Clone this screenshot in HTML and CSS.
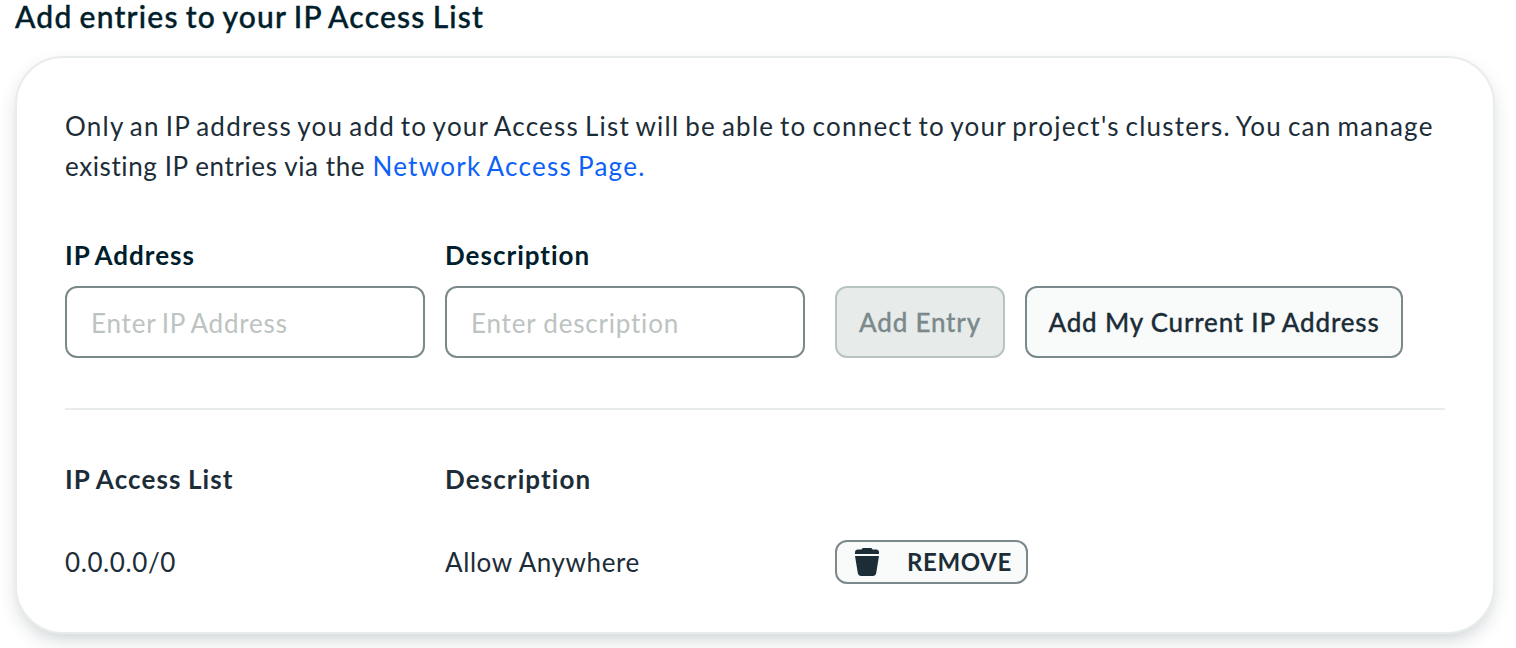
FILE: index.html
```html
<!DOCTYPE html>
<html lang="en">
<head>
<meta charset="utf-8">
<title>IP Access List</title>
<link rel="stylesheet" href="styles.css">
</head>
<body>
<h2 class="title">Add entries to your IP Access List</h2>
<section class="card">
  <p class="intro"><span class="intro-first">Only an IP address you add to your Access List will be able to connect to your project's clusters. You can manage</span><br>existing IP entries via the <a class="link" href="#">Network Access Page.</a></p>
  <form class="entry">
    <label class="field"><span class="label">IP Address</span><input class="input ip-input" type="text" placeholder="Enter IP Address"></label>
    <label class="field"><span class="label">Description</span><input class="input desc-input" type="text" placeholder="Enter description"></label>
    <button class="button add" type="button" disabled>Add Entry</button>
    <button class="button current" type="button">Add My Current IP Address</button>
  </form>
  <div class="list">
    <div class="heading">IP Access List</div>
    <div class="heading">Description</div>
    <div></div>
    <div class="value">0.0.0.0/0</div>
    <div class="value">Allow Anywhere</div>
    <button class="remove" type="button"><svg class="trash" viewBox="0 0 24 28" aria-hidden="true"><path d="M8 0h8q1 0 1.500 1.500H21q3 0 3 3V6H0V4.500q0-3 3-3h3.500Q7 0 8 0z"/><path d="M0 8h24l-2.800 17q-.5 3-3.500 3H6.300q-3 0-3.500-3z"/></svg>REMOVE</button>
  </div>
</section>
</body>
</html>
```
FILE: styles.css
```css
* { box-sizing: border-box; }
body {
  margin: 0;
  height: 648px;
  overflow: hidden;
  background: #fff;
  color: #1c2d38;
  font: 400 26px/40px Lato, "Open Sans", sans-serif;
  font-variant-ligatures: none;
}
.title {
  height: 36px;
  margin: 0 0 20px 15px;
  color: #001e2b;
  font-size: 30px;
  font-weight: 500;
  line-height: 33px;
  letter-spacing: 1.22px;
  word-spacing: -1.7px;
  white-space: nowrap;
  -webkit-text-stroke: .4px currentColor;
}
.card {
  width: 1480px;
  height: 578px;
  margin-left: 15px;
  padding: 48px;
  border: 2px solid #e8edeb;
  border-radius: 48px;
  background: #fff;
  box-shadow: 0 8px 20px -4px rgba(0, 30, 43, .22);
}
.intro { margin: 0; white-space: nowrap; letter-spacing: .6px; }
.intro-first { letter-spacing: 1.24px; word-spacing: -2px; }
.link { color: #0d61f8; text-decoration: none; letter-spacing: 1.3px; word-spacing: -2.2px; }
.entry {
  display: flex;
  align-items: flex-end;
  height: 224px;
  padding-bottom: 50px;
  border-bottom: 2px solid #e8edeb;
}
.field { display: flex; flex-direction: column; width: 360px; margin-right: 20px; }
.label {
  margin-bottom: 11px;
  color: #001e2b;
  font-weight: 700;
  letter-spacing: 1px;
  word-spacing: -2px;
}
.heading {
  padding-bottom: 2px;
  font-weight: 700;
  letter-spacing: 1.1px;
  word-spacing: -1px;
}
.value { letter-spacing: .6px; }
.input {
  width: 360px;
  height: 72px;
  padding: 2px 24px 0;
  border: 2px solid #7c898b;
  border-radius: 12px;
  background: #fff;
  font: inherit;
}
.input::placeholder { color: #bcc3c1; opacity: 1; }
.ip-input { letter-spacing: .8px; word-spacing: -1.6px; }
.desc-input { letter-spacing: .8px; }
.button {
  height: 72px;
  padding: 0;
  border: 2px solid #7b898c;
  border-radius: 12px;
  background: #f9fbfa;
  color: #1c2d38;
  font: inherit;
  font-weight: 500;
  letter-spacing: .8px;
  white-space: nowrap;
  -webkit-text-stroke: .3px currentColor;
}
.add {
  width: 170px;
  margin: 0 20px 0 10px;
  border-color: #b8c4c2;
  background: #e7ebe9;
  color: #7b898c;
}
.current { width: 378px; }
.list {
  display: grid;
  grid-template-columns: 380px 390px auto;
  grid-template-rows: 40px 44px;
  row-gap: 40px;
  justify-content: start;
  align-items: center;
  padding-top: 50px;
}
.remove {
  display: flex;
  align-items: center;
  width: 193px;
  height: 44px;
  padding: 0 0 0 18px;
  border: 2px solid #7b898c;
  border-radius: 12px;
  background: #f9fbfa;
  color: #1c2d38;
  font: inherit;
  font-size: 24px;
  font-weight: 700;
  letter-spacing: .6px;
}
.trash { width: 24px; height: 28px; margin-right: 28px; fill: currentColor; }
```
